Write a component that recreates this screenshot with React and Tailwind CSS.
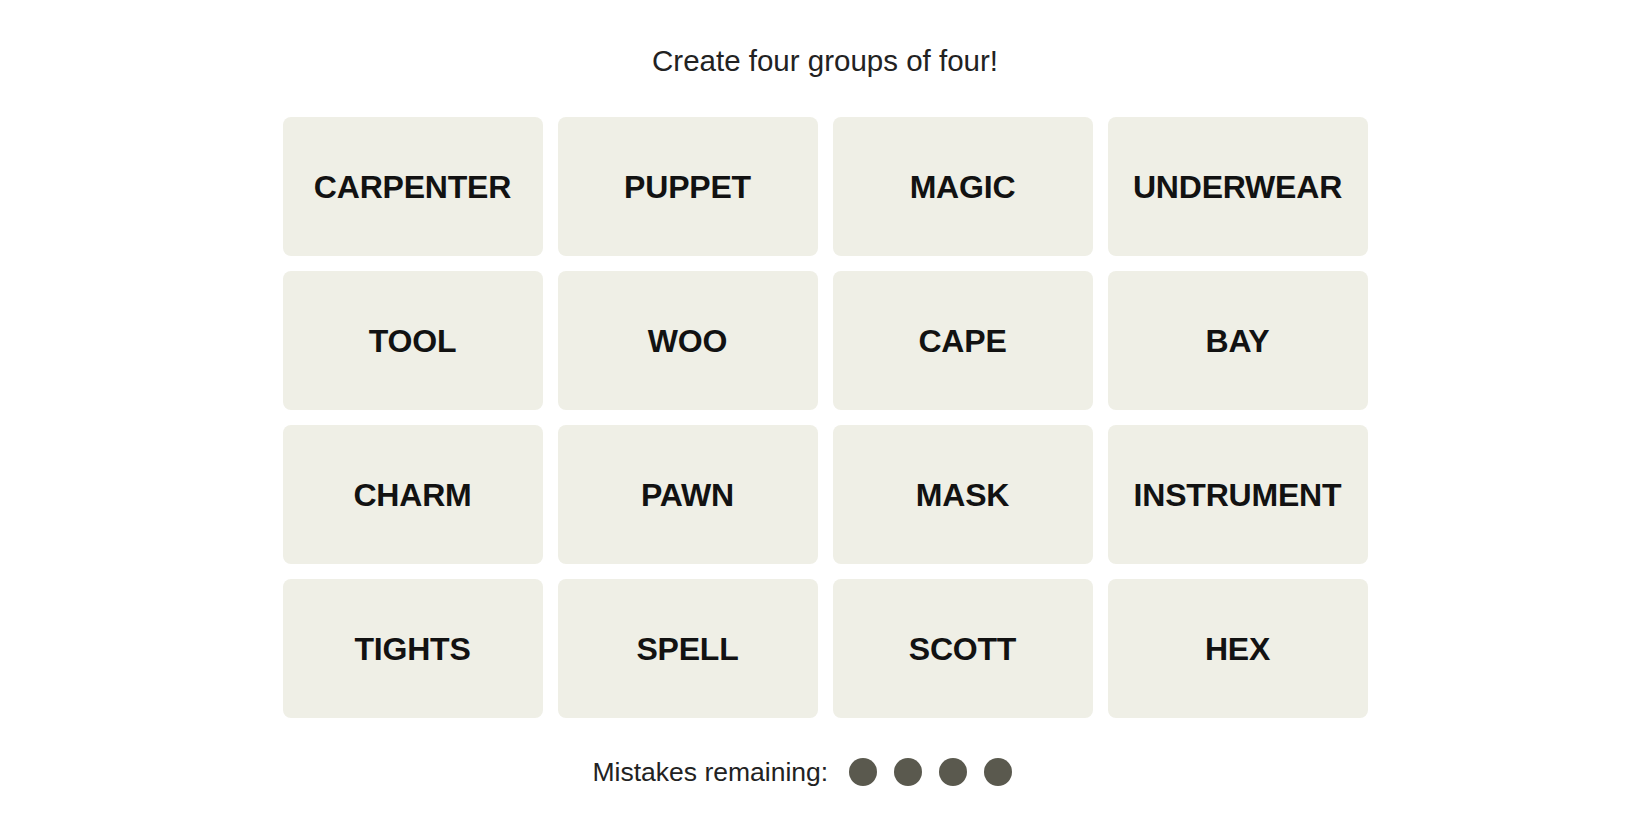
import React from 'react';

const words = [
  'CARPENTER', 'PUPPET', 'MAGIC', 'UNDERWEAR',
  'TOOL', 'WOO', 'CAPE', 'BAY',
  'CHARM', 'PAWN', 'MASK', 'INSTRUMENT',
  'TIGHTS', 'SPELL', 'SCOTT', 'HEX',
];

const App = () => {
  return (
    <div className="min-h-screen bg-white flex flex-col items-center font-['Liberation_Sans',Arial,sans-serif]">
      {/* Header */}
      <h1 className="pt-[43px] text-[29.5px] leading-[36px] font-normal text-[#222222]">
        Create four groups of four!
      </h1>

      {/* Board */}
      <div className="mt-[38px] w-[1085px] grid grid-cols-4 gap-[15px]">
        {words.map((w) => (
          <button
            key={w}
            className="h-[139px] rounded-[8px] bg-[#efefe6] flex items-center justify-center text-[32px] font-bold text-[#121212] tracking-[-0.2px]"
          >
            {w}
          </button>
        ))}
      </div>

      {/* Mistakes */}
      <div className="mt-[40px] w-[1085px] flex items-center pl-[310px]">
        <span className="text-[26.5px] leading-[28px] text-[#222222]">Mistakes remaining:</span>
        <div className="flex items-center gap-[17px] ml-[21px]">
          <span className="w-7 h-7 rounded-full bg-[#5a594e]"></span>
          <span className="w-7 h-7 rounded-full bg-[#5a594e]"></span>
          <span className="w-7 h-7 rounded-full bg-[#5a594e]"></span>
          <span className="w-7 h-7 rounded-full bg-[#5a594e]"></span>
        </div>
      </div>
    </div>
  );
};

export default App;
